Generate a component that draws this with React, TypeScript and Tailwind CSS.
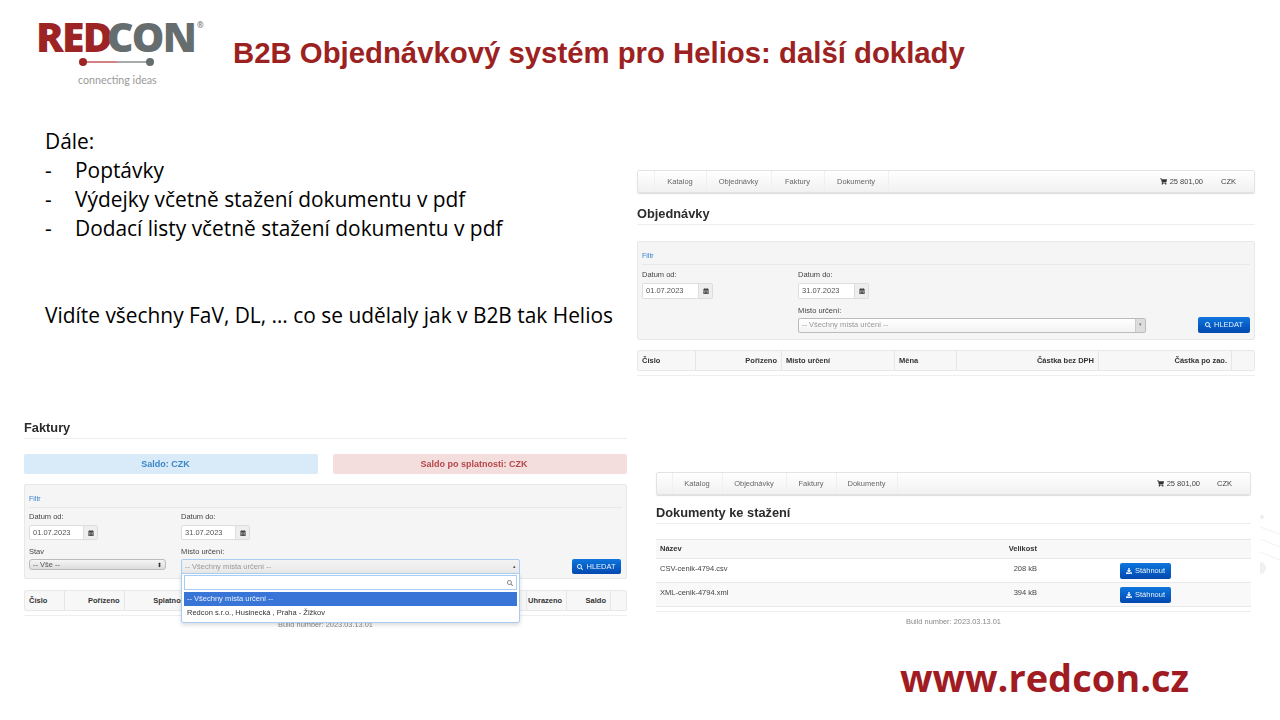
import React from "react";
import { FaCalendarAlt, FaSearch, FaShoppingCart, FaDownload } from "react-icons/fa";

const sans = "font-['Liberation_Sans',Arial,sans-serif]";

function Navbar({ tabs, gapLeft, czkGap, pr }: { tabs: number[]; gapLeft: number; czkGap: string; pr: string }) {
  const names = ["Katalog", "Objednávky", "Faktury", "Dokumenty"];
  return (
    <div className="flex h-[23px] items-stretch rounded-[2px] border border-[#e3e3e3] bg-linear-to-b from-white to-[#f1f1f1] text-[7.5px] text-[#666] shadow-[0_1px_1px_#ddd]">
      <div className="border-r border-[#f0f0f0]" style={{ width: gapLeft }} />
      {names.map((n, i) => (
        <div key={n} className="flex items-center justify-center border-r border-[#f0f0f0] pr-[1px]" style={{ width: tabs[i] }}>
          {n}
        </div>
      ))}
      <div className={`ml-auto flex items-center ${czkGap} ${pr} text-[#444]`}>
        <span className="flex items-center gap-[3px]">
          <FaShoppingCart className="h-[7px] w-[7px] text-[#333]" />
          25 801,00
        </span>
        <span>CZK</span>
      </div>
    </div>
  );
}

function Heading({ children, mb }: { children: React.ReactNode; mb: string }) {
  return <div className={`border-b border-[#eee] text-[12.8px] leading-[20px] font-bold text-[#2b2b2b] ${mb}`}>{children}</div>;
}

function FieldLabel({ children }: { children: React.ReactNode }) {
  return <div className="text-[7.5px] leading-[10px] text-[#444]">{children}</div>;
}

function DateInput({ value, w, h }: { value: string; w: string; h: string }) {
  return (
    <div className={`mt-[3px] flex w-fit rounded-[2px] border border-[#ddd] text-[7.5px] text-[#555] ${h}`}>
      <div className={`flex items-center bg-white pl-[3px] ${w}`}>{value}</div>
      <div className="flex w-[14px] items-center justify-center border-l border-[#ddd] bg-[#eee]">
        <FaCalendarAlt className="h-[6px] w-[6px] text-[#444]" />
      </div>
    </div>
  );
}

function BlueButton({ className, children }: { className: string; children: React.ReactNode }) {
  return (
    <div className={`flex items-center justify-center gap-[3px] rounded-[2px] bg-linear-to-b from-[#0f76dd] to-[#0448b0] text-[7.5px] text-[#e6f0fb] ${className}`}>
      {children}
    </div>
  );
}

function THead({ cols }: { cols: { t: string; w: number; right?: boolean }[] }) {
  return (
    <div className="flex h-[21px] rounded-[2px] border border-[#e8e8e8] bg-[#f7f7f7] text-[7.5px] font-bold text-[#333]">
      {cols.map((c, i) => (
        <div
          key={i}
          className={`flex items-center border-r border-[#e6e6e6] px-[4px] last:border-r-0 ${c.right ? "justify-end" : ""}`}
          style={{ width: c.w }}
        >
          {c.t}
        </div>
      ))}
    </div>
  );
}

function Objednavky() {
  return (
    <div className="absolute top-[170px] left-[637px] w-[618px] blur-[0.35px]">
      <Navbar tabs={[52, 65, 53, 64]} gapLeft={17} czkGap="gap-[18px]" pr="pr-[18px]" />
      <div className="mt-[11px]">
        <Heading mb="mb-[16px]">Objednávky</Heading>
      </div>
      <div className="h-[99px] rounded-[2px] border border-[#e8e8e8] bg-[#f5f5f5] px-[4px]">
        <div className="mt-[9px] border-b border-[#e9e9e9] pb-[3px] text-[7px] leading-[10px] text-[#3b82d0]">Filtr</div>
        <div className="relative flex pt-[5px]">
          <div className="w-[156px]">
            <FieldLabel>Datum od:</FieldLabel>
            <DateInput value="01.07.2023" w="w-[55px]" h="h-[16px]" />
          </div>
          <div className="flex-1">
            <FieldLabel>Datum do:</FieldLabel>
            <DateInput value="31.07.2023" w="w-[55px]" h="h-[16px]" />
            <div className="mt-[7px]">
              <FieldLabel>Místo určení:</FieldLabel>
            </div>
            <div className="mt-[1px] flex items-center gap-[52px]">
              <div className="flex h-[15px] w-[348px] rounded-[2px] border border-[#bbb] bg-linear-to-b from-white to-[#f3f3f3] text-[7.5px] text-[#999]">
                <div className="flex flex-1 items-center pl-[3px]">-- Všechny místa určení --</div>
                <div className="flex w-[10px] items-center justify-center border-l border-[#ccc] bg-[#ddd] text-[5px] text-[#777]">▾</div>
              </div>
              <BlueButton className="h-[16px] w-[52px]">
                <FaSearch className="h-[6px] w-[6px]" />
                HLEDAT
              </BlueButton>
            </div>
          </div>
        </div>
      </div>
      <div className="mt-[10px]">
        <THead
          cols={[
            { t: "Číslo", w: 58 },
            { t: "Pořízeno", w: 86, right: true },
            { t: "Místo určení", w: 113 },
            { t: "Měna", w: 62 },
            { t: "Částka bez DPH", w: 142, right: true },
            { t: "Částka po zao.", w: 133, right: true },
            { t: "", w: 22 },
          ]}
        />
      </div>
      <div className="mt-[4px] border-b border-[#eee]" />
    </div>
  );
}

function Faktury() {
  return (
    <div className="absolute top-[418px] left-[24px] w-[603px] blur-[0.35px]">
      <Heading mb="mb-[15px]">Faktury</Heading>
      <div className="flex justify-between text-[9px] leading-[20px] font-bold">
        <div className="h-[20px] w-[294px] rounded-[2px] bg-[#d9ebf8] pr-[11px] text-center text-[#3c86c6]">Saldo: CZK</div>
        <div className="h-[20px] w-[294px] rounded-[2px] bg-[#f3dddd] pr-[12px] text-center text-[#b5474a]">Saldo po splatnosti: CZK</div>
      </div>
      <div className="mt-[10px] h-[95px] rounded-[2px] border border-[#e8e8e8] bg-[#f5f5f5] px-[4px]">
        <div className="mt-[9px] border-b border-[#e9e9e9] pb-[3px] text-[7px] leading-[10px] text-[#3b82d0]">Filtr</div>
        <div className="relative flex pt-[4px]">
          <div className="w-[152px]">
            <FieldLabel>Datum od:</FieldLabel>
            <DateInput value="01.07.2023" w="w-[53px]" h="h-[15px]" />
            <div className="mt-[7px]">
              <FieldLabel>Stav</FieldLabel>
            </div>
            <div className="mt-[2px] flex h-[11px] w-[137px] items-center justify-between rounded-[3px] border border-[#bbb] bg-linear-to-b from-[#f5f5f5] to-[#ddd] px-[3px] text-[7.5px] text-[#555]">
              <span>-- Vše --</span>
              <span className="text-[6px] leading-none text-[#333]">⬍</span>
            </div>
          </div>
          <div className="flex-1">
            <FieldLabel>Datum do:</FieldLabel>
            <DateInput value="31.07.2023" w="w-[53px]" h="h-[15px]" />
            <div className="mt-[7px]">
              <FieldLabel>Místo určení:</FieldLabel>
            </div>
            <div className="mt-[2px] flex items-start gap-[52px]">
              <div className="flex h-[15px] w-[339px] items-center justify-between rounded-t-[2px] border border-[#a9ccf2] bg-linear-to-b from-[#f3f3f3] to-[#e9e9e9] px-[3px] text-[7.5px] text-[#999]">
                <span>-- Všechny místa určení --</span>
                <span className="text-[5px] text-[#555]">▴</span>
              </div>
              <BlueButton className="h-[15px] w-[49px]">
                <FaSearch className="h-[6px] w-[6px]" />
                HLEDAT
              </BlueButton>
            </div>
          </div>
        </div>
      </div>
      <div className="relative mt-[11px]">
        <THead
          cols={[
            { t: "Číslo", w: 40 },
            { t: "Pořízeno", w: 60, right: true },
            { t: "Splatnost", w: 68, right: true },
            { t: "", w: 277 },
            { t: "", w: 59 },
            { t: "Uhrazeno", w: 40, right: true },
            { t: "Saldo", w: 44, right: true },
            { t: "", w: 15 },
          ]}
        />
        <div className="absolute top-[-17px] left-[157px] z-10 h-[50px] w-[339px] rounded-b-[2px] border border-[#a9ccf2] bg-white px-[2px] pt-[1px] text-[7.5px] text-[#333] shadow-[0_2px_4px_rgba(0,0,0,0.15)]">
          <div className="flex h-[15px] items-center justify-end border border-[#a9ccf2] pr-[3px]">
            <FaSearch className="h-[6px] w-[6px] text-[#888]" />
          </div>
          <div className="mt-[2px] flex h-[14px] items-center bg-[#3875d7] pl-[3px] text-[#eaf1fb]">-- Všechny místa určení --</div>
          <div className="flex h-[14px] items-center pl-[3px]">Redcon s.r.o., Husinecká , Praha - Žižkov</div>
        </div>
      </div>
      <div className="mt-[4px] border-b border-[#eee]" />
      <div className="mt-[4px] text-center text-[7.4px] leading-[10px] text-[#888]">Build number: 2023.03.13.01</div>
    </div>
  );
}

function Dokumenty() {
  const rows = [
    { n: "CSV-cenik-4794.csv", s: "208 kB", bg: "bg-white" },
    { n: "XML-cenik-4794.xml", s: "394 kB", bg: "bg-[#f9f9f9]" },
  ];
  return (
    <div className="absolute top-[472px] left-[656px] w-[595px] blur-[0.35px]">
      <Navbar tabs={[50, 64, 50, 61]} gapLeft={16} czkGap="gap-[17px]" pr="pr-[18px]" />
      <div className="mt-[8px]">
        <Heading mb="mb-[15px]">Dokumenty ke stažení</Heading>
      </div>
      <div className="flex h-[20px] border-y border-[#e8e8e8] bg-[#f8f8f8] text-[7.5px] font-bold text-[#333]">
        <div className="flex w-[381px] items-center justify-end pl-[4px]">
          <span className="mr-auto">Název</span>
          Velikost
        </div>
      </div>
      {rows.map((r) => (
        <div key={r.n} className={`flex h-[24px] border-b border-[#e8e8e8] text-[7.5px] text-[#444] ${r.bg}`}>
          <div className="flex w-[381px] justify-between pt-[4px] pl-[4px]">
            <span>{r.n}</span>
            <span>{r.s}</span>
          </div>
          <div className="pt-[4px] pl-[83px]">
            <BlueButton className="h-[16px] w-[51px]">
              <FaDownload className="h-[6px] w-[6px]" />
              Stáhnout
            </BlueButton>
          </div>
        </div>
      ))}
      <div className="mt-[4px] border-b border-[#eee]" />
      <div className="mt-[5px] text-center text-[7.4px] leading-[10px] text-[#888]">Build number: 2023.03.13.01</div>
    </div>
  );
}

function Logo() {
  return (
    <div className="relative h-[70px] w-[170px]">
      <div className="ml-[-3px] flex h-[32px] items-center font-['Open_Sans',sans-serif] text-[41px] leading-none font-extrabold tracking-[-1.8px]">
        <span className="text-[#9c2424]">RED</span>
        <span className="ml-[-4px] text-[#666d6e]">CON</span>
        <span className="mt-[-22px] ml-[2px] text-[8px] font-bold tracking-normal text-[#777]">®</span>
      </div>
      <svg className="absolute top-[36px] left-[39px]" width="76" height="12" viewBox="0 0 76 12">
        <line x1="5" y1="6" x2="39" y2="6" stroke="#c4595b" strokeWidth="1.4" />
        <line x1="39" y1="6" x2="72" y2="6" stroke="#8a8f90" strokeWidth="1.4" />
        <circle cx="5" cy="6" r="4" fill="#9c2424" />
        <circle cx="72" cy="6" r="4" fill="#666d6e" />
      </svg>
      <div className="absolute top-[53px] left-[39px] font-['Lato',sans-serif] text-[10.7px] leading-[14px] text-[#999]">connecting ideas</div>
    </div>
  );
}

export default function App() {
  return (
    <div className="relative h-[720px] w-[1280px] overflow-hidden bg-white font-['Liberation_Sans',Arial,sans-serif]">
      <div className="flex items-start pt-[20px] pl-[39px]">
        <Logo />
        <h1 className={`${sans} mt-[16px] ml-[24px] text-[29.33px] leading-[34px] font-bold text-[#9c2222]`}>
          B2B Objednávkový systém pro Helios: další doklady
        </h1>
      </div>

      <div className="mt-[37px] pl-[45px] font-['Open_Sans',sans-serif] text-[20.9px] leading-[29px] text-black">
        <div>Dále:</div>
        {["Poptávky", "Výdejky včetně stažení dokumentu v pdf", "Dodací listy včetně stažení dokumentu v pdf"].map((t) => (
          <div key={t} className="flex">
            <span className="w-[30px]">-</span>
            <span>{t}</span>
          </div>
        ))}
        <div className="mt-[58px]">Vidíte všechny FaV, DL, … co se udělaly jak v B2B tak Helios</div>
      </div>

      <Objednavky />
      <Faktury />
      <Dokumenty />

      <svg className="absolute top-[510px] left-[1258px]" width="22" height="70" viewBox="0 0 22 70">
        <circle cx="4" cy="7" r="2" fill="#eeeeee" />
        <path d="M2 17 L22 24 M2 29 L22 37 M2 42 L22 50" stroke="#f2f2f2" strokeWidth="1" />
        <path d="M2 52 A5 5 0 0 1 2 64 Z" fill="#f0f0f0" />
      </svg>

      <div className="absolute top-[654px] left-[900px] font-['Open_Sans',sans-serif] text-[38px] leading-[46px] font-bold text-[#a01c22]">
        www.redcon.cz
      </div>
    </div>
  );
}
